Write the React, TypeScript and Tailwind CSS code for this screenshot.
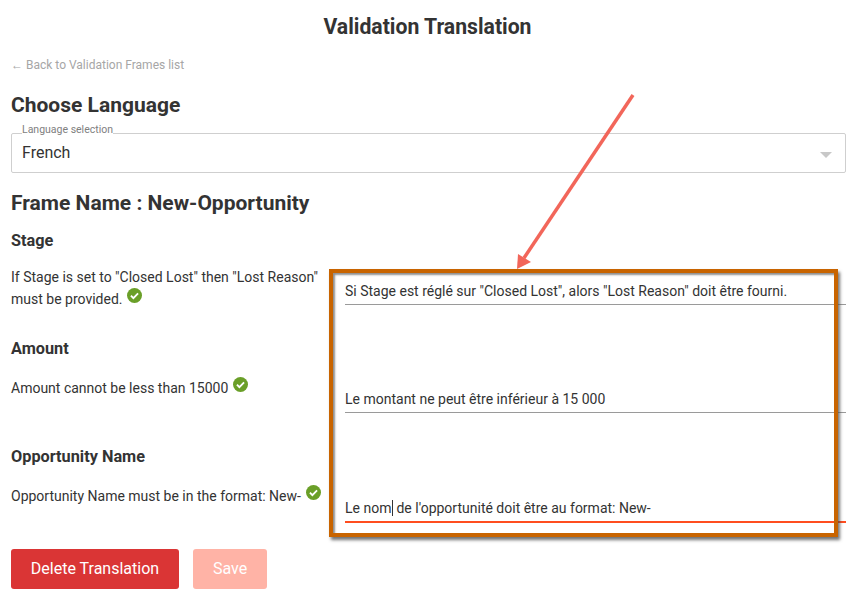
const rules = [
  {
    field: "Stage",
    source: 'If Stage is set to "Closed Lost" then "Lost Reason" must be provided.',
    translation: 'Si Stage est réglé sur "Closed Lost", alors "Lost Reason" doit être fourni.',
    sourceClass: "mt-0",
  },
  {
    field: "Amount",
    source: "Amount cannot be less than 15000",
    translation: "Le montant ne peut être inférieur à 15 000",
    sourceClass: "mt-[2px]",
  },
  {
    field: "Opportunity Name",
    source: "Opportunity Name must be in the format: New-",
    translation: "de l'opportunité doit être au format: New-",
    sourceClass: "mt-[2px]",
    focused: true,
  },
];

const CheckIcon = () => (
  <svg viewBox="0 0 16 16" className="inline-block w-[15px] h-[15px] ml-[5px] align-[1px]">
    <circle cx="8" cy="8" r="8" fill="#6a9f28" />
    <path d="M4.2 8.2l2.6 2.6 5-5" fill="none" stroke="#fff" strokeWidth="2" />
  </svg>
);

const App = () => {
  return (
    <div className="relative w-[854px] h-[595px] overflow-hidden bg-white text-[#333333] font-['Roboto',sans-serif]">
      <h1 className="pt-[14px] pl-[1px] text-center text-[21.2px] leading-[26px] font-bold">Validation Translation</h1>

      <div className="pl-[11px] pr-[8px]">
        <div className="mt-[18px] text-[12px] leading-[14px] text-[#a6a6a6]">
          <span className="font-['Liberation_Sans',sans-serif]">←</span> Back to Validation Frames list
        </div>

        <h2 className="mt-[20px] text-[21px] leading-[26px] font-bold">Choose Language</h2>

        <div className="relative mt-[15px] h-[40px] rounded-[2px] border border-[#cfcfcf] pl-[10px] flex items-center">
          <span className="absolute left-[10px] top-[-10px] bg-white text-[10.5px] leading-[12px] text-[#808080]">
            Language selection
          </span>
          <span className="text-[16px]">French</span>
          <span className="absolute right-[13px] top-[18px] border-x-[6px] border-t-[6px] border-x-transparent border-t-[#c8c8c8]" />
        </div>

        <h2 className="mt-[17px] text-[21px] leading-[26px] font-bold">Frame Name : New-Opportunity</h2>

        <div className="mt-[15px]">
          {rules.map((rule) => (
            <section key={rule.field} className="h-[108px]">
              <h3 className="text-[16.3px] leading-[20px] font-bold">{rule.field}</h3>
              <div className="mt-[16px] flex items-start">
                <p className={`w-[334px] shrink-0 pr-[10px] text-[14px] leading-[21px] ${rule.sourceClass}`}>
                  {rule.source}
                  <CheckIcon />
                </p>
                <div
                  className={
                    rule.focused
                      ? "mt-[14px] flex-1 h-[26px] border-b-2 border-[#ff4d1f] text-[14px] leading-[22px]"
                      : "mt-[13px] flex-1 h-[25px] border-b border-[#9a9a9a] text-[14px] leading-[22px]"
                  }
                >
                  {rule.focused ? (
                    <>
                      Le nom<span className="border-l border-[#333333] ml-[1px] pl-[3px]">{rule.translation}</span>
                    </>
                  ) : (
                    rule.translation
                  )}
                </div>
              </div>
            </section>
          ))}
        </div>

        <div className="mt-[-6px] flex gap-[14px]">
          <button className="h-[40px] w-[168px] rounded-[3px] bg-[#da3535] text-[16px] text-white">
            Delete Translation
          </button>
          <button className="h-[40px] w-[74px] rounded-[3px] bg-[#ffb3a6] text-[16px] text-white">Save</button>
        </div>
      </div>

      {/* annotation over the screenshot */}
      <div className="absolute left-[329px] top-[269px] w-[509px] h-[268px] border-[4px] border-[#c86400] shadow-[2px_3px_3px_rgba(70,70,70,0.75),inset_2px_2px_2px_rgba(70,70,70,0.6)]" />
      <svg className="absolute left-0 top-0 pointer-events-none" width="854" height="595">
        <line x1="633" y1="95" x2="524" y2="258" stroke="#f2665a" strokeWidth="3.5" />
        <path d="M517 269L518 254L531 262Z" fill="#f2665a" />
      </svg>
    </div>
  );
};

export default App;
